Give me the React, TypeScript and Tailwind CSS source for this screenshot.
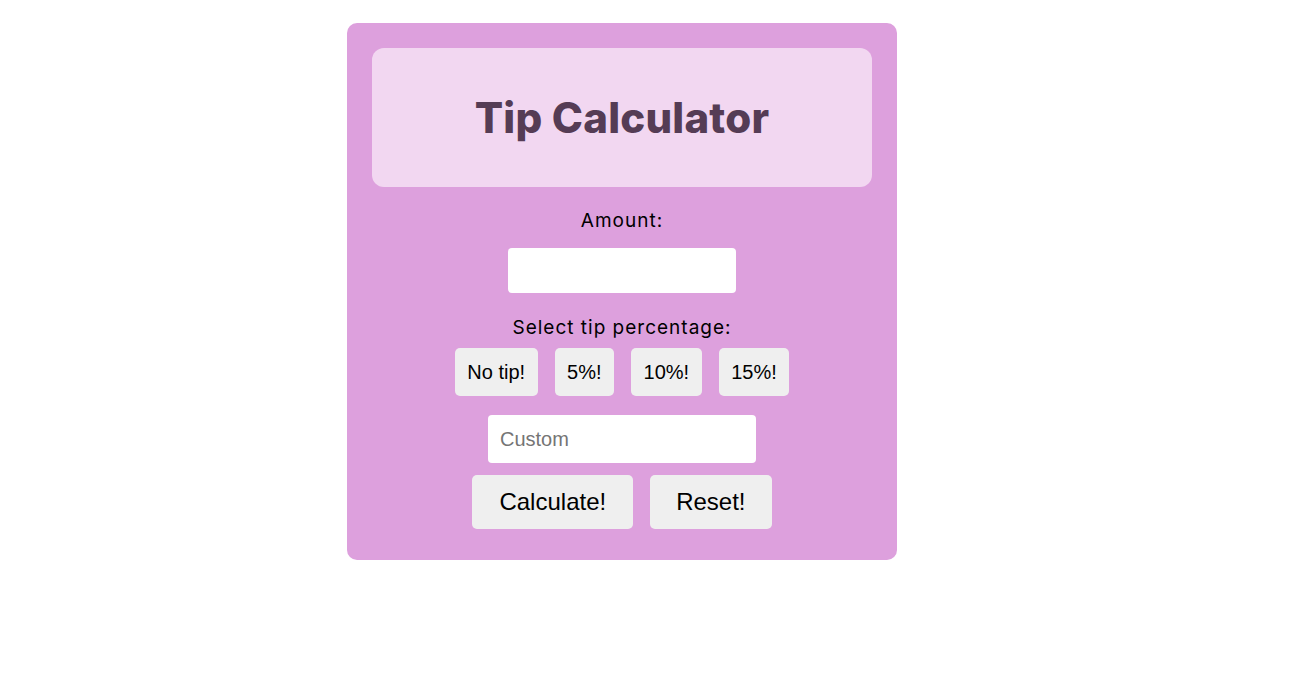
import React, { useState } from 'react';

const TIPS = ['No tip!', '5%!', '10%!', '15%!'];

const App: React.FC = () => {
  const [amount, setAmount] = useState('');
  const [custom, setCustom] = useState('');

  return (
    <div className="min-h-screen bg-white">
      <div className="flex justify-center pt-[23px] pr-[62px]">
        <div className="w-[550px] rounded-[10px] bg-[#dda0dd] p-[25px] pb-[31px] flex flex-col items-center">
          {/* Header */}
          <div className="w-full h-[139px] rounded-[12px] bg-[#f2d7f1] flex items-center justify-center">
            <h1 className="text-[42px] font-extrabold text-[#553c55] font-['Inter',sans-serif] tracking-[0.2px]">Tip Calculator</h1>
          </div>

          <label className="mt-[20px] text-[19px] leading-[28px] text-black font-['Inter',sans-serif] tracking-[1px]">Amount:</label>
          <input
            type="text"
            value={amount}
            onChange={e => setAmount(e.target.value)}
            className="mt-[13px] w-[228px] h-[45px] rounded-[4px] bg-white outline-none px-3 text-[20px] font-['Liberation_Sans',sans-serif]"
          />

          <label className="mt-[21px] text-[19px] leading-[28px] text-black font-['Inter',sans-serif] tracking-[1px]">Select tip percentage:</label>
          <div className="mt-[6px] flex gap-[17px]">
            {TIPS.map(t => (
              <button
                key={t}
                className="h-[48px] px-[12.5px] rounded-[5px] bg-[#efefef] text-[20px] text-black font-['Liberation_Sans',sans-serif]"
              >
                {t}
              </button>
            ))}
          </div>

          <input
            type="text"
            placeholder="Custom"
            value={custom}
            onChange={e => setCustom(e.target.value)}
            className="mt-[19px] w-[268px] h-[48px] rounded-[4px] bg-white outline-none px-3 text-[20px] placeholder:text-[#757575] font-['Liberation_Sans',sans-serif]"
          />

          <div className="mt-[12px] flex gap-[17px]">
            <button className="h-[54px] px-[27px] rounded-[5px] bg-[#efefef] text-[24px] text-black font-['Liberation_Sans',sans-serif]">Calculate!</button>
            <button className="h-[54px] px-[26px] rounded-[5px] bg-[#efefef] text-[24px] text-black font-['Liberation_Sans',sans-serif]">Reset!</button>
          </div>
        </div>
      </div>
    </div>
  );
};

export default App;
